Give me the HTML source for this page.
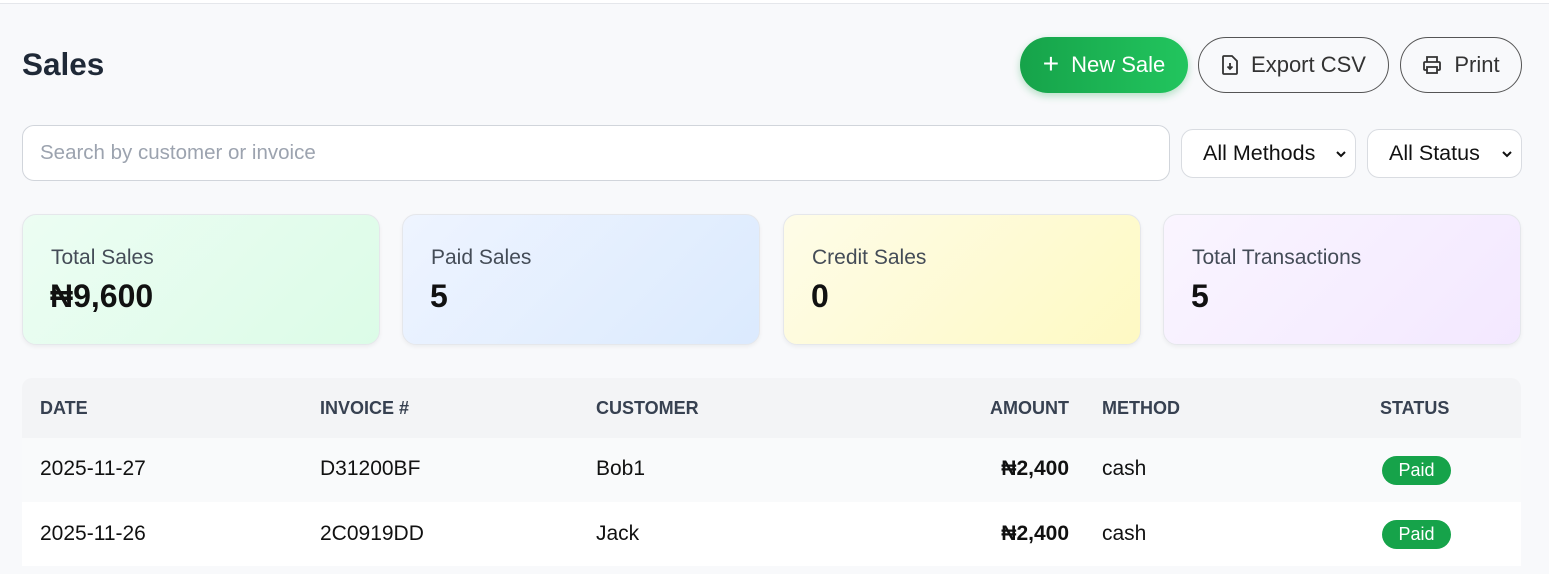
<!DOCTYPE html>
<html><head><meta charset="utf-8"><style>
*{box-sizing:border-box;margin:0;padding:0}
body{width:1549px;height:574px;overflow:hidden;background:#f8f9fb;font-family:"Liberation Sans",Arial,sans-serif;color:#1f2937;position:relative}
.topline{position:absolute;left:0;right:0;top:0;height:4px;background:#fff;border-bottom:1px solid #e5e7eb}
.abs{position:absolute}
h1{position:absolute;left:22px;top:46px;font-size:31.5px;font-weight:700;color:#1f2937}
.btn{position:absolute;top:37px;height:56px;border-radius:28px;display:flex;align-items:center;justify-content:center;font-size:22px;gap:12px}
.green{left:1020px;width:168px;background:linear-gradient(90deg,#16a34a,#22c55e);color:#fff;box-shadow:0 3px 8px rgba(22,163,74,.3)}
.out{border:1px solid #555;color:#333;background:transparent}
.search{position:absolute;left:22px;top:125px;width:1148px;height:56px;background:#fff;border:1px solid #d1d5db;border-radius:12px;padding-left:17px;line-height:54px;font-size:20.5px;color:#9ca3af}
.sel{position:absolute;top:129px;height:49px;background:#fff;border:1px solid #d9dce1;border-radius:12px;font-size:21.5px;color:#111;line-height:47px;padding-left:21px}
.sel svg{position:absolute;right:8px;top:20px}
.card{position:absolute;top:214px;width:358px;height:131px;border-radius:14px;border:1px solid #e5e7eb;box-shadow:0 2px 4px rgba(0,0,0,.05)}
.card .l{position:absolute;left:28px;top:31px;font-size:21px;color:#444c57}
.card .v{position:absolute;left:27px;top:63px;font-size:32px;font-weight:700;color:#111}
.th{position:absolute;top:398px;font-size:18px;font-weight:700;color:#374151}
.td{position:absolute;font-size:21px;color:#111}
.badge{position:absolute;left:1382px;width:69px;height:29px;border-radius:15px;background:#16a34a;color:#fff;font-size:18px;text-align:center;line-height:29px}
</style></head><body>
<div class="topline"></div>
<h1>Sales</h1>
<div class="btn green"><span style="font-size:28px;font-weight:300;margin-top:-3px">+</span>New Sale</div>
<div class="btn out" style="left:1198px;width:191px"><svg width="18" height="20" viewBox="0 0 18 20" fill="none" stroke="#333" stroke-width="1.8"><path d="M3 1h8l5 5v12a1 1 0 0 1-1 1H3a1 1 0 0 1-1-1V2a1 1 0 0 1 1-1z"/><path d="M9 8v6M6.5 11.5 9 14l2.5-2.5"/></svg>Export CSV</div>
<div class="btn out" style="left:1400px;width:122px"><svg width="20" height="20" viewBox="0 0 20 20" fill="none" stroke="#333" stroke-width="1.8"><path d="M5 7V2h10v5M5 15H3a1 1 0 0 1-1-1V8a1 1 0 0 1 1-1h14a1 1 0 0 1 1 1v6a1 1 0 0 1-1 1h-2"/><rect x="5" y="12" width="10" height="6"/></svg>Print</div>
<div class="search">Search by customer or invoice</div>
<div class="sel" style="left:1181px;width:175px">All Methods<svg width="12" height="8" viewBox="0 0 12 8" fill="none" stroke="#111" stroke-width="2"><path d="M2 2l4 4 4-4"/></svg></div>
<div class="sel" style="left:1367px;width:155px">All Status<svg width="12" height="8" viewBox="0 0 12 8" fill="none" stroke="#111" stroke-width="2"><path d="M2 2l4 4 4-4"/></svg></div>
<div class="card" style="left:22px;background:linear-gradient(135deg,#ecfdf3,#dcfce7)"><div class="l">Total Sales</div><div class="v">₦9,600</div></div>
<div class="card" style="left:402px;background:linear-gradient(135deg,#eef4ff,#dbeafe)"><div class="l">Paid Sales</div><div class="v">5</div></div>
<div class="card" style="left:783px;background:linear-gradient(135deg,#fefce8,#fef9c3)"><div class="l">Credit Sales</div><div class="v">0</div></div>
<div class="card" style="left:1163px;background:linear-gradient(135deg,#faf5ff,#f3e8ff)"><div class="l">Total Transactions</div><div class="v">5</div></div>
<div class="abs" style="left:22px;top:378px;width:1499px;height:60px;background:#f3f4f6;border-radius:10px 10px 0 0"></div>
<div class="abs" style="left:22px;top:438px;width:1499px;height:64px;background:#f9fafb"></div>
<div class="abs" style="left:22px;top:502px;width:1499px;height:64px;background:#fff"></div>
<div class="th" style="left:40px">DATE</div>
<div class="th" style="left:320px">INVOICE #</div>
<div class="th" style="left:596px">CUSTOMER</div>
<div class="th" style="left:900px;width:169px;text-align:right">AMOUNT</div>
<div class="th" style="left:1102px">METHOD</div>
<div class="th" style="left:1380px">STATUS</div>
<div class="td" style="left:40px;top:457px">2025-11-27</div>
<div class="td" style="left:320px;top:457px">D31200BF</div>
<div class="td" style="left:596px;top:457px">Bob1</div>
<div class="td" style="left:900px;width:169px;text-align:right;top:457px;font-weight:700">₦2,400</div>
<div class="td" style="left:1102px;top:457px">cash</div>
<div class="badge" style="top:456px">Paid</div>
<div class="td" style="left:40px;top:522px">2025-11-26</div>
<div class="td" style="left:320px;top:522px">2C0919DD</div>
<div class="td" style="left:596px;top:522px">Jack</div>
<div class="td" style="left:900px;width:169px;text-align:right;top:522px;font-weight:700">₦2,400</div>
<div class="td" style="left:1102px;top:522px">cash</div>
<div class="badge" style="top:520px">Paid</div>
</body></html>
